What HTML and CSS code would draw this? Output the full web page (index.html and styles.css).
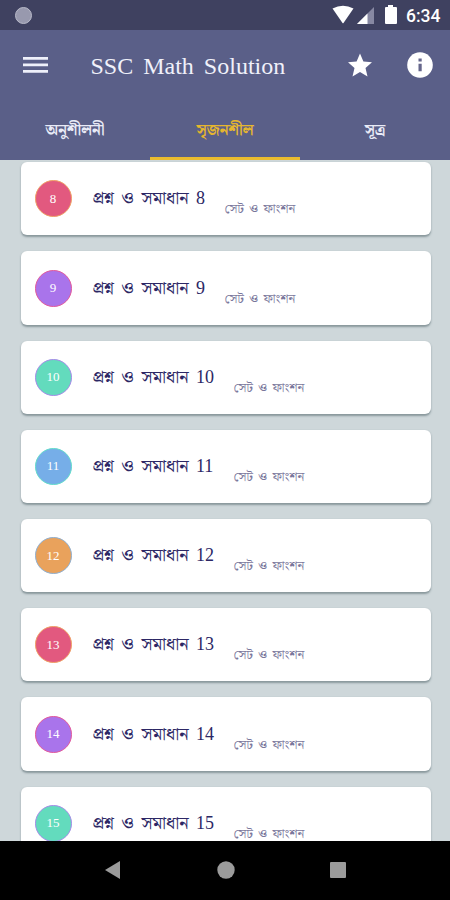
FILE: index.html
```
<!DOCTYPE html>
<html lang="bn">
<head>
<meta charset="utf-8">
<meta name="viewport" content="width=device-width, initial-scale=1">
<title>SSC Math Solution</title>
<link rel="stylesheet" href="styles.css">
</head>
<body>
<div class="phone">
  <header class="status">
    <span class="status-dot"></span>
    <svg class="status-icons" width="72" height="22" viewBox="0 0 72 22">
      <path fill="#fff" d="M.5 4.500Q11 -1 21.500 4.500L11.500 19Q11 19.500 10.500 19Z"/>
      <path fill="#8788a2" d="M25 20L42 3V20Z"/>
      <path fill="#fff" d="M25 20L35.500 9.500V20Z"/>
      <path fill="#fff" d="M56 1h5v2h3q1 0 1 1v15q0 1-1 1H54q-1 0-1-1V4q0-1 1-1h2z"/>
    </svg>
    <span class="clock">6:34</span>
  </header>
  <div class="appbar">
    <svg class="menu" width="25" height="18" viewBox="0 0 25 18"><path fill="#eef0fa" d="M0 1h25v2.800H0zM0 7.500h25v2.800H0zM0 14h25v2.800H0z"/></svg>
    <h1>SSC Math Solution</h1>
    <svg class="star" width="24" height="24" viewBox="0 0 24 24"><path fill="#fff" d="M12 .5l3.400 8 8.600.8-6.500 5.700 2 8.500L12 19l-7.500 4.500 2-8.500L0 9.300l8.600-.8z"/></svg>
    <svg class="info" width="26" height="26" viewBox="0 0 26 26"><circle cx="13" cy="13" r="12.800" fill="#fff"/><path fill="#65668b" d="M11.500 6.500h3.200v3h-3.200zM11.500 11.700h3.200v7.500h-3.200z"/></svg>
  </div>
  <nav class="tabs">
    <span class="tab"><b>অনুশীলনী</b></span>
    <span class="tab active"><b>সৃজনশীল</b></span>
    <span class="tab"><b>সূত্র</b></span>
  </nav>
  <main class="list">
    <article class="card"><span class="badge red">8</span><h2><span class="words">প্রশ্ন ও সমাধান</span><span class="num one">8</span></h2><p>সেট ও ফাংশন</p></article>
    <article class="card"><span class="badge purple">9</span><h2><span class="words">প্রশ্ন ও সমাধান</span><span class="num one">9</span></h2><p>সেট ও ফাংশন</p></article>
    <article class="card"><span class="badge green">10</span><h2><span class="words">প্রশ্ন ও সমাধান</span><span class="num">10</span></h2><p>সেট ও ফাংশন</p></article>
    <article class="card"><span class="badge blue">11</span><h2><span class="words">প্রশ্ন ও সমাধান</span><span class="num">11</span></h2><p>সেট ও ফাংশন</p></article>
    <article class="card"><span class="badge orange">12</span><h2><span class="words">প্রশ্ন ও সমাধান</span><span class="num">12</span></h2><p>সেট ও ফাংশন</p></article>
    <article class="card"><span class="badge red">13</span><h2><span class="words">প্রশ্ন ও সমাধান</span><span class="num">13</span></h2><p>সেট ও ফাংশন</p></article>
    <article class="card"><span class="badge purple">14</span><h2><span class="words">প্রশ্ন ও সমাধান</span><span class="num">14</span></h2><p>সেট ও ফাংশন</p></article>
    <article class="card"><span class="badge green">15</span><h2><span class="words">প্রশ্ন ও সমাধান</span><span class="num">15</span></h2><p>সেট ও ফাংশন</p></article>
  </main>
  <footer class="navbar">
    <svg width="16" height="18" viewBox="0 0 16 18"><path fill="#9b9b9b" d="M15 0v18L0 9z"/></svg>
    <svg width="18" height="18" viewBox="0 0 18 18"><circle cx="9" cy="9" r="8.700" fill="#9b9b9b"/></svg>
    <svg width="16" height="16" viewBox="0 0 16 16"><rect width="16" height="16" rx="1" fill="#9b9b9b"/></svg>
  </footer>
</div>
</body>
</html>
```
FILE: styles.css
```
* { box-sizing: border-box; }
body { margin: 0; }
h1, h2, p { margin: 0; font-weight: 400; }
svg { display: block; flex: none; }

.phone {
  display: flex;
  flex-direction: column;
  width: 450px;
  height: 900px;
  overflow: hidden;
  background: #ced7da;
  font-family: "Noto Serif Bengali", "Noto Sans Bengali", "Liberation Serif", serif;
}

.status {
  display: flex;
  align-items: center;
  flex: none;
  height: 30px;
  padding: 0 9px 0 15px;
  background: #3f4160;
}
.status-dot {
  width: 17px;
  height: 17px;
  border: 1.5px solid #b9bac9;
  border-radius: 50%;
  background: #9899ae;
}
.status-icons { margin-left: auto; }
.clock {
  width: 35px;
  margin: 2px 0 0 2px;
  color: #fff;
  font: 500 17.5px/20px Roboto, sans-serif;
  white-space: nowrap;
}

.appbar {
  display: flex;
  align-items: center;
  flex: none;
  height: 70px;
  padding: 0 17px 0 23px;
  background: #5a5f88;
}
.appbar h1 {
  width: 196px;
  margin: 1px 0 0 42.5px;
  color: #f0f1fa;
  font: 400 24px/30px "Liberation Serif", serif;
  word-spacing: 4px;
  white-space: nowrap;
}
.star { margin-left: 61.5px; }
.info { margin-left: auto; }

.tabs {
  display: grid;
  grid-template-columns: repeat(3, 1fr);
  flex: none;
  height: 60.4px;
  background: #5a5f88;
}
.tab {
  display: flex;
  align-items: center;
  justify-content: center;
  padding-top: 3px;
  border-bottom: 3px solid transparent;
  color: #e9ebf7;
  font-size: 15.7px;
}
.tab b { white-space: nowrap; }
.tab.active { color: #e5b62f; border-color: #eabb2e; }

.list {
  display: flex;
  flex-direction: column;
  flex: 1;
  min-height: 0;
  gap: 16px;
  padding: 1.9px 19.5px 0 20.5px;
  overflow: hidden;
}
.card {
  display: flex;
  align-items: center;
  flex: none;
  height: 73.2px;
  padding-left: 14px;
  border-radius: 6px;
  background: #fff;
  box-shadow: 0 1.5px 2px rgba(70, 90, 95, 0.5);
}
.badge {
  display: flex;
  align-items: center;
  justify-content: center;
  width: 37px;
  height: 37px;
  border: 1.5px solid;
  border-radius: 50%;
  font: 13px/16px "Liberation Serif", serif;
  -webkit-text-fill-color: #fff;
}
.red { background: #e2597f; border-color: #efa065; }
.purple { background: #a974eb; border-color: #e2599b; }
.green { background: #63dbbd; border-color: #a58be8; }
.blue { background: #76aee8; border-color: #63dccb; }
.orange { background: #e9a25c; border-color: #8fafd0; }

.card h2 {
  display: flex;
  align-items: baseline;
  margin-left: 21px;
  color: #2c2765;
  font-size: 18px;
  line-height: 24px;
  white-space: nowrap;
}
.words { width: 103.5px; word-spacing: 3px; }
.num { width: 18px; font-family: "Liberation Serif", serif; font-size: 18px; }
.num.one { width: 9px; }
.card p {
  width: 72px;
  margin: 23px 0 0 19.5px;
  color: #79769b;
  font-size: 13px;
  line-height: 16px;
  word-spacing: 2px;
  white-space: nowrap;
}

.navbar {
  display: flex;
  align-items: center;
  justify-content: space-between;
  flex: none;
  height: 59.500px;
  padding: 0 104px 0 105px;
  background: #000;
}
```
